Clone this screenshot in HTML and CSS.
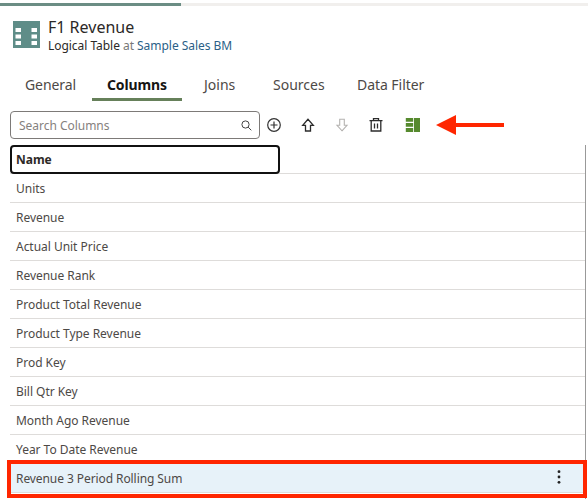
FILE: index.html
```html
<!DOCTYPE html>
<html lang="en">
<head>
<meta charset="utf-8">
<title>F1 Revenue</title>
<link rel="stylesheet" href="styles.css">
</head>
<body>
<div class="topbar"><div class="topbar-active"></div></div>
<header class="header">
  <svg class="table-icon" width="27" height="27" viewBox="0 0 27 27"><path fill="#5f8d88" d="M0 0h27v27H0z"/><path fill="#fff" d="M2.500 7h5.500v4h-5.500zM2.500 13.500h5.500v4h-5.500zM2.500 20h5.500v4h-5.500zM18.500 7h5.500v4h-5.500zM18.500 13.500h5.500v4h-5.500zM18.500 20h5.500v4h-5.500z"/></svg>
  <div>
    <h1 class="title">F1 Revenue</h1>
    <p class="subtitle">Logical Table <span class="at">at</span> <a class="link">Sample Sales BM</a></p>
  </div>
</header>
<nav class="tabs">
  <span class="tab general">General</span>
  <span class="tab active">Columns</span>
  <span class="tab joins">Joins</span>
  <span class="tab sources">Sources</span>
  <span class="tab filter">Data Filter</span>
</nav>
<div class="toolbar">
  <div class="search"><span>Search Columns</span>
    <svg width="11" height="11" viewBox="0 0 11 11" fill="none" stroke="#444" stroke-width="1"><circle cx="4.500" cy="4.500" r="3.600"/><path d="M7.100 7.100l3.200 3.200"/></svg>
  </div>
  <div class="tools">
    <svg width="16" height="16" viewBox="0 0 16 16" fill="none" stroke="#333" stroke-width="1.200"><circle cx="8" cy="8" r="6.300"/><path d="M8 4.500v7M4.500 8h7"/></svg>
    <svg width="16" height="16" viewBox="0 0 16 16" fill="none" stroke="#2b2b2b" stroke-width="1.300"><path d="M8 2.200L2.700 8.300h2.800v5.700h5V8.300h2.800z"/></svg>
    <svg width="16" height="16" viewBox="0 0 16 16" fill="none" stroke="#b5b3b1" stroke-width="1.100"><path d="M8 13.800l5-5.500h-2.700V2.200H5.700v6.100H3z"/></svg>
    <svg width="16" height="16" viewBox="0 0 16 16" fill="none" stroke="#2b2b2b" stroke-width="1.300"><path d="M1.500 3.700h13M5.500 3.500V1.600h5v1.900M3.200 4v10h9.600V4M6.500 6.500v5M9.500 6.500v5"/></svg>
    <svg class="layout-icon" width="16" height="16" viewBox="0 0 16 16" fill="#568a2e"><path d="M.8 1h7.400v3.800H.8zM.8 6h7.400v3.800H.8zM.8 11h7.400v4H.8zM9 1h6v14H9z"/></svg>
  </div>
  <svg class="arrow" width="68" height="20" viewBox="0 0 68 20" fill="#ff2600"><path d="M0 10L20 0v8h48v4H20v8z"/></svg>
</div>
<main class="grid">
  <div class="row head"><span class="head-cell">Name</span></div>
  <div class="row">Units</div>
  <div class="row">Revenue</div>
  <div class="row">Actual Unit Price</div>
  <div class="row">Revenue Rank</div>
  <div class="row">Product Total Revenue</div>
  <div class="row">Product Type Revenue</div>
  <div class="row">Prod Key</div>
  <div class="row">Bill Qtr Key</div>
  <div class="row">Month Ago Revenue</div>
  <div class="row">Year To Date Revenue</div>
  <div class="row selected"><span>Revenue 3 Period Rolling Sum</span>
    <svg class="menu-dots" width="4" height="14" viewBox="0 0 4 14" fill="#222"><circle cx="2" cy="1.700" r="1.400"/><circle cx="2" cy="7" r="1.400"/><circle cx="2" cy="12.300" r="1.400"/></svg>
  </div>
  <div class="highlight"></div>
</main>
</body>
</html>
```
FILE: styles.css
```css
* { box-sizing: border-box; }
body {
  margin: 0;
  padding-top: 3px;
  width: 588px;
  height: 499px;
  overflow: hidden;
  background: #fff;
  color: #4d4946;
  font-family: "Noto Sans", "Open Sans", sans-serif;
  font-size: 12px;
}
svg { display: block; flex: none; }
.topbar { height: 3px; background: #f1efed; }
.topbar-active { width: 181px; height: 3px; background: #6b8d84; }
.header { display: flex; height: 57px; padding: 10px 0 0 13px; }
.table-icon { margin: 5px 8px 0 0; }
.title {
  margin: 0;
  font-size: 16px;
  font-weight: 400;
  line-height: 22px;
  color: #2b2927;
}
.subtitle {
  margin: 0;
  line-height: 16px;
  color: #2b2927;
  letter-spacing: -0.04px;
  white-space: nowrap;
}
.at { color: #777; }
.link { color: #2b5f87; }
.tabs { display: flex; height: 38px; padding-left: 10px; font-size: 14px; }
.tab { height: 38px; padding: 0 15px; line-height: 44px; white-space: nowrap; }
.general { width: 82px; letter-spacing: -0.1px; }
.active {
  width: 90px;
  border-bottom: 3px solid #66805a;
  color: #161513;
  font-weight: 700;
  text-align: center;
  padding: 0;
  letter-spacing: -0.1px;
}
.joins { width: 77px; padding-left: 22px; }
.sources { width: 83px; padding-left: 14px; }
.filter { letter-spacing: -0.05px; }
.toolbar { display: flex; height: 44px; padding: 10px 0 0 10px; }
.search {
  display: flex;
  align-items: center;
  justify-content: space-between;
  width: 250px;
  height: 28px;
  padding: 1px 7px 0 8px;
  border: 1px solid #7d7a78;
  border-radius: 4px;
  color: #85817e;
  letter-spacing: -0.03px;
}
.tools { display: flex; gap: 18px; margin: 6px 0 0 6px; }
.layout-icon { margin-left: 3px; }
.arrow { margin: 4px 0 0 15px; }
.grid {
  position: relative;
  width: 576px;
  height: 354px;
  margin-left: 10px;
  border-right: 1px solid #999;
}
.row {
  height: 29px;
  padding-left: 6px;
  border-bottom: 1px solid #dedcda;
  line-height: 30px;
  letter-spacing: -0.03px;
}
.head { padding: 0; }
.head-cell {
  display: block;
  width: 270px;
  height: 29px;
  padding-left: 4px;
  border: 2px solid #111;
  border-radius: 4px;
  line-height: 26px;
  font-weight: 700;
  color: #2d2926;
}
.selected {
  display: flex;
  align-items: flex-start;
  justify-content: space-between;
  padding-right: 24px;
  background: #e7f2f9;
  letter-spacing: -0.08px;
}
.menu-dots { margin-top: 6px; }
.highlight {
  position: absolute;
  left: -3px;
  top: 315px;
  width: 580px;
  height: 38px;
  border: 4px solid #ff2600;
}
```
